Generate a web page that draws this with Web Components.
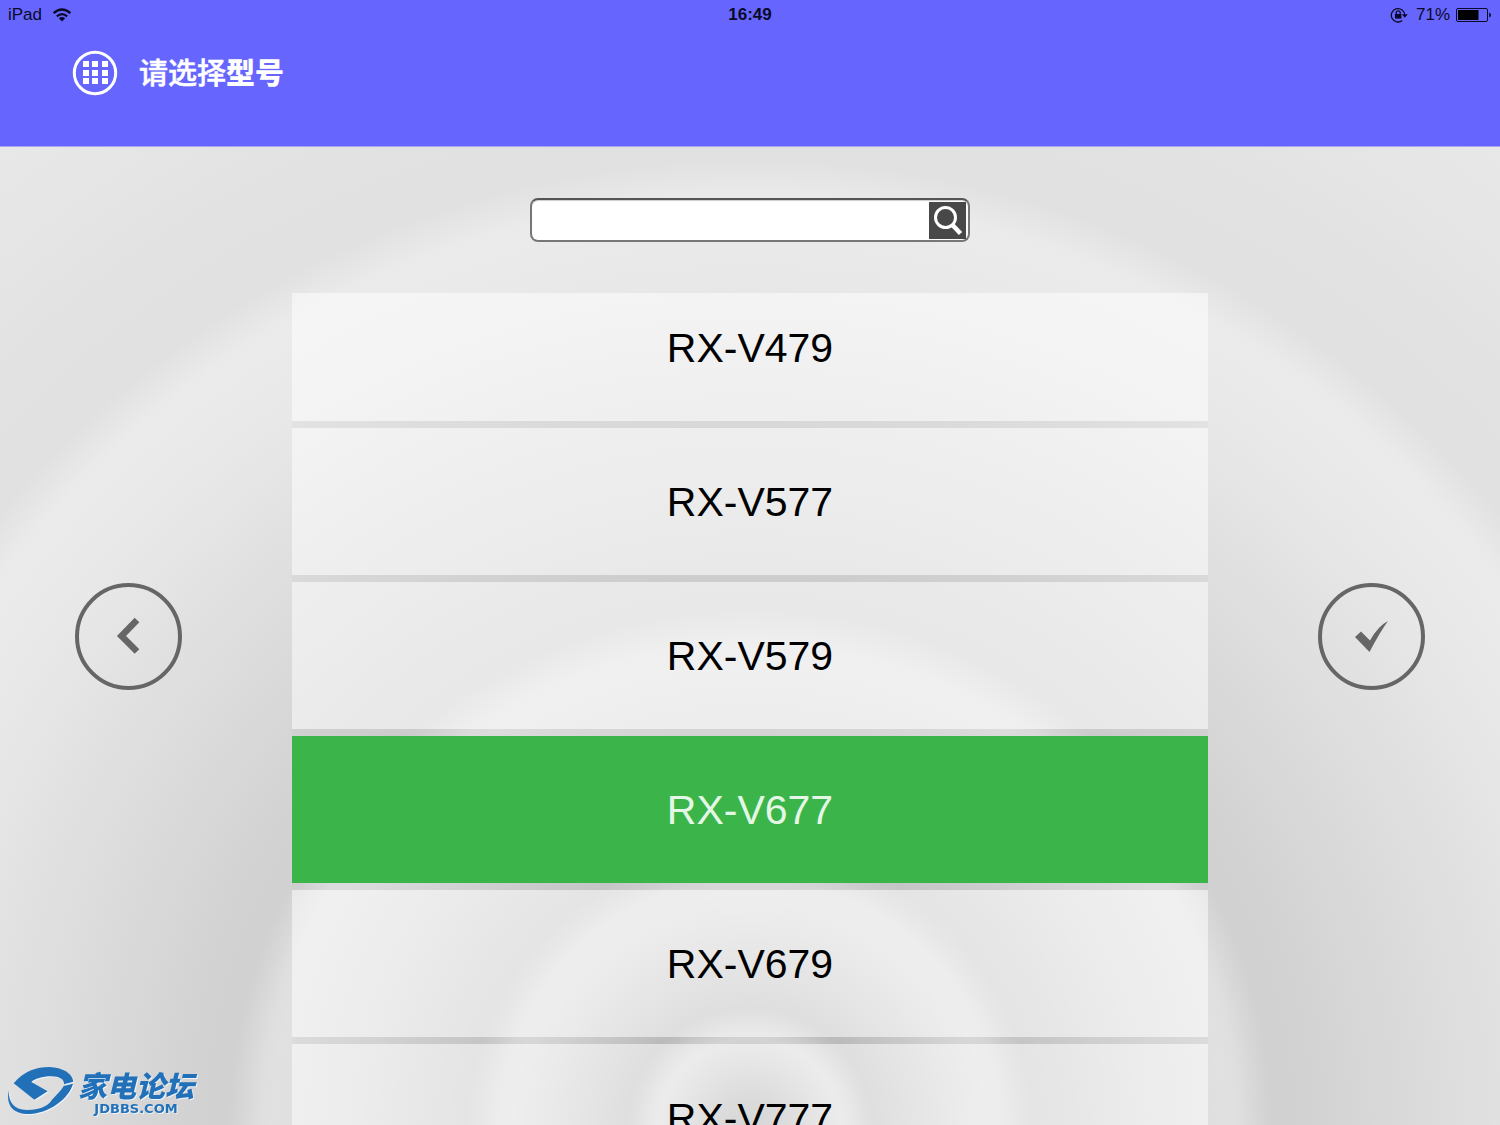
<!DOCTYPE html>
<html lang="zh-CN">
<head>
<meta charset="utf-8">
<meta name="viewport" content="width=device-width, initial-scale=1">
<title>请选择型号</title>
<style>
body { margin: 0; font-family: "Liberation Sans", "Noto Sans CJK SC", sans-serif; }
</style>
</head>
<body>
<model-app></model-app>
<script>
class BaseElement extends HTMLElement {
  constructor() {
    super();
    this.attachShadow({ mode: "open" }).innerHTML = this.constructor.markup;
  }
}

class StatusBar extends BaseElement {
  static markup = `
    <style>
      :host { display: grid; grid-template-columns: 1fr auto 1fr; align-items: center; height: 30px; padding: 0 8px; font-size: 17px; line-height: 20px; color: #0a0a28; }
      div { display: flex; align-items: center; gap: 8px; }
      .left { gap: 10px; }
      .right { justify-content: flex-end; }
      .time { font-weight: 700; }
      svg { display: block; }
      .battery { margin-left: -2px; }
    </style>
    <div class="left"><span>iPad</span>
      <svg width="20" height="14" viewBox="0 0 20 14" fill="none" stroke="currentColor" stroke-width="2.3">
        <path d="M1.6 5.2Q10-2.2 18.4 5.2M4.8 8.3Q10 3.9 15.2 8.3"/>
        <path d="M6.8 10.2Q10 7.6 13.2 10.2L10 13.4Z" fill="currentColor" stroke="none"/>
      </svg>
    </div>
    <span class="time">16:49</span>
    <div class="right">
      <svg width="18" height="16" viewBox="0 0 18 16" fill="none" stroke="currentColor" stroke-width="1.3">
        <path d="M14.7 8.3A6.7 6.7 0 1 0 12.3 13.4"/>
        <path d="M11.8 7.2H17.8L14.8 10.8Z" fill="currentColor" stroke="none"/>
        <rect x="5" y="7" width="6.4" height="4.6" fill="currentColor" stroke="none"/>
        <path d="M6.2 7.2V5.8A2 2 0 0 1 10.2 5.8V7.2"/>
      </svg>
      <span>71%</span>
      <svg class="battery" width="36" height="14" viewBox="0 0 36 14">
        <rect x=".5" y=".5" width="31" height="13" rx="1.5" fill="none" stroke="currentColor"/>
        <rect x="2" y="2" width="20.5" height="10" fill="#000"/>
        <path d="M33.2 4.5Q35 5 35 7T33.2 9.5Z" fill="currentColor"/>
      </svg>
    </div>`;
}

class PageHeader extends BaseElement {
  static markup = `
    <style>
      :host { display: block; height: 146px; background: #6666ff; border-bottom: 1px solid #a5a6ee; }
      header { display: flex; align-items: center; gap: 21px; padding: 20px 72px 0; color: #fff; }
      button { display: block; padding: 0; border: 0; background: none; color: inherit; }
      svg { display: block; }
    </style>
    <slot name="status"></slot>
    <header>
      <button type="button" aria-label="菜单">
        <svg width="46" height="46" viewBox="0 0 46 46">
          <circle cx="23" cy="23" r="20.7" fill="none" stroke="#fff" stroke-width="3"/>
          <path fill="#fff" d="M11 11h6v6h-6zM20 11h6v6h-6zM30 11h6v6h-6zM11 20h6v6h-6zM20 20h6v6h-6zM30 20h6v6h-6zM11 28h6v6h-6zM20 28h6v6h-6zM30 28h6v6h-6z"/>
        </svg>
      </button>
      <slot></slot>
    </header>`;
}

class SearchBox extends BaseElement {
  static markup = `
    <style>
      :host { display: block; width: 440px; max-width: 100%; }
      form { display: flex; align-items: center; box-sizing: border-box; height: 44px; margin: 0; padding-right: 2px; background: #fff; border: 2px solid #777; border-top-color: #555; border-radius: 8px; box-shadow: inset 0 1px 1px #ccc; }
      input { flex: 1; min-width: 0; height: 36px; box-sizing: border-box; padding: 0 12px; border: 0; background: none; font: 20px "Liberation Sans", sans-serif; outline: 0; }
      button { width: 37px; height: 37px; padding: 0; border: 0; background: #484848; }
      svg { display: block; }
    </style>
    <form role="search" onsubmit="return false">
      <input type="text" aria-label="搜索型号">
      <button type="submit" aria-label="搜索">
        <svg width="37" height="37" viewBox="0 0 37 37" fill="none" stroke="#fff">
          <circle cx="16.5" cy="15.5" r="10" stroke-width="3"/>
          <path d="M23 22.500L31.5 31.5" stroke-width="4.600"/>
        </svg>
      </button>
    </form>`;
}

class RoundButton extends BaseElement {
  static markup = `
    <style>
      :host { display: block; }
      button { display: flex; align-items: center; justify-content: center; width: 107px; height: 107px; padding: 0; border: 4px solid #666; border-radius: 50%; background: none; color: #666; }
    </style>
    <button type="button"><slot></slot></button>`;
  connectedCallback() {
    this.shadowRoot.querySelector("button").setAttribute("aria-label", this.getAttribute("label"));
  }
}

class ModelItem extends BaseElement {
  static markup = `
    <style>
      :host { display: block; border-bottom: 7px solid rgba(0, 0, 0, .02); }
      button { display: block; width: 100%; height: 147px; padding: 0; border: 0; background: rgba(255, 255, 255, .5); color: #000; font: 41px/48px "Liberation Sans", sans-serif; text-align: center; }
      :host([selected]) button { background: #3bb54a; color: #e4f7e6; }
    </style>
    <button type="button"><slot></slot></button>`;
  connectedCallback() {
    this.shadowRoot.querySelector("button").setAttribute("aria-pressed", this.hasAttribute("selected"));
  }
}

class ModelList extends BaseElement {
  static markup = `
    <style>
      :host { display: block; overflow-y: auto; scrollbar-width: none; }
    </style>
    <slot></slot>`;
}

class SiteMark extends BaseElement {
  static markup = `
    <style>
      :host { display: block; }
      a { display: flex; align-items: center; gap: 4px; color: #2271b8; text-decoration: none; filter: drop-shadow(1px 1px 0 #eef2fa); }
      svg { display: block; }
      .text { display: grid; justify-items: center; }
      .name { font: italic 900 29px/36px "Noto Sans CJK SC", sans-serif; }
      .domain { font: 700 13px/13px "DejaVu Sans", sans-serif; }
    </style>
    <a href="#">
      <svg width="66" height="50" viewBox="26 42 198 150" fill="currentColor">
        <path d="M43 97C75 60 110 48 150 48C190 50 219 66 222 92L194 100C196 85 180 76 155 76C130 76 105 84 96 93L145 121L105 146Z"/>
        <path d="M28 118C27 150 42 177 82 177C130 176 150 160 158 146C176 128 190 112 193 105L221 98C209 142 150 190 80 189C36 187 20 158 28 118Z"/>
      </svg>
      <span class="text"><span class="name">家电论坛</span><span class="domain">JDBBS.COM</span></span>
    </a>`;
}

class ModelApp extends BaseElement {
  static markup = `
    <style>
      :host { display: flex; flex-direction: column; height: 100vh; position: relative; overflow: hidden; }
      main {
        flex: 1; min-height: 0; display: grid; grid-template-columns: minmax(200px, 1fr) minmax(0, 916px) minmax(200px, 1fr);
        background:
          radial-gradient(circle at 50% calc(100% + 6px),
            #acacac 0, #b8b8b8 35px, #cdcdcd 70px, #d8d8d8 92px,
            rgba(214,214,214,.8) 102px, rgba(196,196,196,0) 124px),
          radial-gradient(circle at 50% calc(100% + 6px),
            #bcbcbc 115px, #c6c6c6 150px, #d4d4d4 200px, #dcdcdc 238px,
            rgba(220,220,220,.9) 252px, rgba(204,204,204,0) 285px),
          radial-gradient(circle at 50% calc(100% + 6px),
            #c6c6c6 265px, #cdcdcd 310px, #d8d8d8 390px, #e1e1e1 475px,
            rgba(225,225,225,.9) 488px, rgba(214,214,214,0) 522px),
          radial-gradient(circle at 50% calc(100% + 6px),
            #d0d0d0 505px, #d3d3d3 570px, #dadada 660px, #e2e2e2 770px, #e8e8e8 850px, #ebebeb 925px,
            #eaeaea 935px, #e1e1e1 972px, #e2e2e2 1060px, #e8e8e8 1230px);
      }
      .side { display: flex; align-items: center; padding: 0 75px; }
      .side.right { justify-content: flex-end; }
      .center { min-height: 0; display: flex; flex-direction: column; align-items: center; gap: 51px; padding-top: 51px; }
      model-list { flex: 1; min-height: 0; align-self: stretch; }
      site-mark { position: absolute; left: 8px; bottom: 10px; }
      h1 { margin: 0; font: 500 29px/42px "Noto Sans CJK SC", sans-serif; padding-bottom: 4px; -webkit-text-stroke: 0.5px #fff; }
      h1 b { font-weight: 900; -webkit-text-stroke: 0; }
    </style>
    <page-header>
      <status-bar slot="status"></status-bar>
      <h1>请选择<b>型号</b></h1>
    </page-header>
    <main>
      <div class="side">
        <round-button label="返回">
          <svg width="40" height="40" viewBox="0 0 40 40" fill="none" stroke="currentColor" stroke-width="6.500"><path d="M28 4L12.500 20L28 35.500"/></svg>
        </round-button>
      </div>
      <div class="center">
        <search-box></search-box>
        <model-list></model-list>
      </div>
      <div class="side right">
        <round-button label="确定">
          <svg width="40" height="40" viewBox="0 0 40 40" fill="currentColor"><path d="M3 21L9 15.500L18 24.500Q26 10 36 5Q28 16 17.500 36Z"/></svg>
        </round-button>
      </div>
    </main>
    <site-mark></site-mark>`;
  connectedCallback() {
    const list = this.shadowRoot.querySelector("model-list");
    for (const name of ["RX-V479", "RX-V577", "RX-V579", "RX-V677", "RX-V679", "RX-V777"]) {
      const item = document.createElement("model-item");
      item.textContent = name;
      if (name === "RX-V677") item.setAttribute("selected", "");
      list.append(item);
    }
    list.scrollTop = 19;
  }
}

customElements.define("status-bar", StatusBar);
customElements.define("page-header", PageHeader);
customElements.define("search-box", SearchBox);
customElements.define("round-button", RoundButton);
customElements.define("model-item", ModelItem);
customElements.define("model-list", ModelList);
customElements.define("site-mark", SiteMark);
customElements.define("model-app", ModelApp);
</script>
</body>
</html>
